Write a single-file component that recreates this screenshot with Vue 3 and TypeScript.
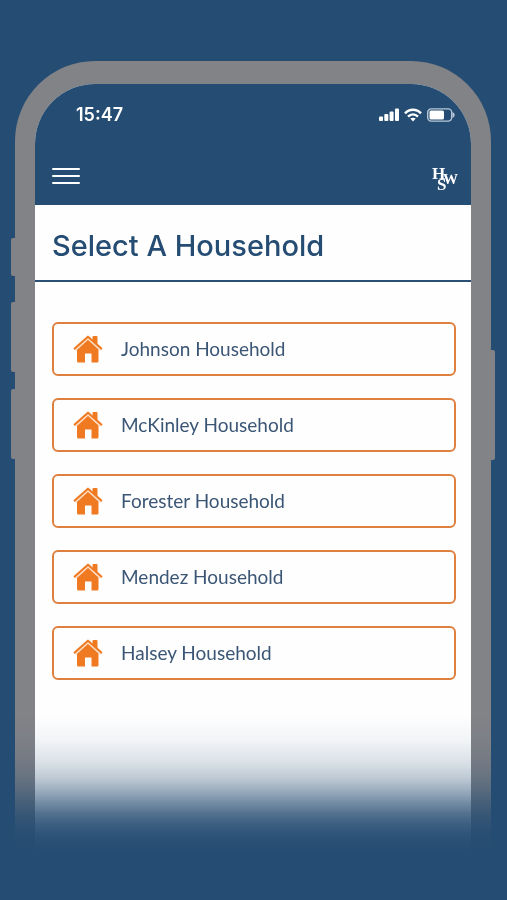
<script setup lang="ts">
interface Household {
  id: number
  name: string
}

const households: Household[] = [
  { id: 1, name: 'Johnson' },
  { id: 2, name: 'McKinley' },
  { id: 3, name: 'Forester' },
  { id: 4, name: 'Mendez' },
  { id: 5, name: 'Halsey' },
]
</script>

<template>
  <div class="page">
    <div class="stage">
      <div class="phone">
        <span class="key key-mute"></span>
        <span class="key key-up"></span>
        <span class="key key-down"></span>
        <span class="key key-power"></span>

        <div class="screen">
          <header class="top">
            <div class="status">
              <time class="clock">15:47</time>
              <div class="signals">
                <svg width="20" height="14" viewBox="0 0 20 14" fill="#fff" aria-hidden="true">
                  <rect x="0" y="8.500" width="4" height="4.500" rx="1" />
                  <rect x="5.300" y="6" width="4" height="7" rx="1" />
                  <rect x="10.600" y="3.500" width="4" height="9.500" rx="1" />
                  <rect x="16" y="0.500" width="4" height="12.500" rx="1" />
                </svg>
                <svg width="18" height="14" viewBox="0 0 18 14" aria-hidden="true">
                  <g fill="none" stroke="#fff" stroke-width="2.400">
                    <path d="M1 5.400C5.500 0.600 12.500 0.600 17 5.400" />
                    <path d="M4 8.700C7 5.800 11 5.800 14 8.700" />
                  </g>
                  <path d="M6.300 10.600C7.800 9.300 10.200 9.300 11.700 10.600L9 13.400Z" fill="#fff" />
                </svg>
                <svg width="28" height="14" viewBox="0 0 28 14" aria-hidden="true">
                  <rect x="0.700" y="0.900" width="24" height="12.200" rx="3.500" fill="none" stroke="#b9c8d8" stroke-width="1.400" />
                  <rect x="2.500" y="2.500" width="14.500" height="9" rx="1.500" fill="#fff" />
                  <path d="M25.500 4C28.400 5.500 28.400 8.500 25.500 10Z" fill="#b9c8d8" />
                </svg>
              </div>
            </div>
            <div class="bar">
              <button class="menu" type="button" aria-label="Menu">
                <span></span><span></span><span></span>
              </button>
              <svg class="logo" width="26" height="36" viewBox="0 0 26 36" role="img" aria-label="HSW">
                <text x="0" y="21" font-size="17">H</text>
                <text x="11" y="26" font-size="15">W</text>
                <text x="5" y="32" font-size="17">S</text>
              </svg>
            </div>
          </header>

          <h1 class="title">Select A Household</h1>

          <ul class="list">
            <li v-for="household in households" :key="household.id">
              <button class="card" type="button">
                <svg width="30" height="30" viewBox="0 0 30 30" aria-hidden="true">
                  <path d="M4 15L15 5L25.500 15V27Q25.500 28.500 24 28.500H18.500V19.500H12V28.500H5.500Q4 28.500 4 27Z" fill="#f07a22" />
                  <path d="M2 16.200L15 4.500L28 16.200" fill="none" stroke="#fde3cd" stroke-width="2.200" />
                  <path d="M19.500 3Q19.500 2 20.500 2H23.500Q24.500 2 24.500 3V11L19.500 6.500Z" fill="#f07a22" />
                  <path d="M1.700 14.500L15 2.700L28.300 14.500" fill="none" stroke="#f07a22" stroke-width="2.200" stroke-linecap="round" stroke-linejoin="round" />
                </svg>
                <span>{{ household.name }} Household</span>
              </button>
            </li>
          </ul>
        </div>
      </div>
    </div>
  </div>
</template>

<style>
body {
  margin: 0;
  background: #254c72;
}
</style>

<style scoped>
.page {
  background: #254c72;
}

/* The device dissolves into the backdrop toward the bottom edge. */
.stage {
  display: flex;
  box-sizing: border-box;
  min-height: 100vh;
  padding: 61px 16px 0 15px;
  mask-image: linear-gradient(
    to top,
    transparent 48px,
    rgb(0 0 0 / 4%) 64px,
    rgb(0 0 0 / 11%) 76px,
    rgb(0 0 0 / 22%) 87px,
    rgb(0 0 0 / 39%) 99px,
    rgb(0 0 0 / 57%) 111px,
    rgb(0 0 0 / 71%) 122px,
    rgb(0 0 0 / 83%) 137px,
    rgb(0 0 0 / 94%) 158px,
    #000 184px
  );
}

.phone {
  position: relative;
  display: flex;
  flex: 1;
  box-sizing: border-box;
  padding: 23px 20px 0;
  border-radius: 80px 80px 0 0;
  background: #828387;
}

.key {
  position: absolute;
  left: -4px;
  width: 4px;
  height: 70px;
  border-radius: 2px 0 0 2px;
  background: #828387;
}

.key-mute {
  top: 177px;
  height: 38px;
}

.key-up {
  top: 241px;
}

.key-down {
  top: 328px;
}

.key-power {
  top: 289px;
  right: -4px;
  left: auto;
  height: 110px;
  border-radius: 0 2px 2px 0;
}

.screen {
  flex: 1;
  overflow: hidden;
  border-radius: 60px 60px 0 0;
  background: #fefefe;
}

.top {
  background: #254c72;
  color: #fff;
}

.status {
  display: flex;
  align-items: center;
  justify-content: space-between;
  height: 62px;
  padding: 0 16px 0 41px;
}

.clock {
  font: 600 18px/24px Inter, sans-serif;
}

.signals {
  display: flex;
  align-items: center;
  gap: 5px;
}

.bar {
  display: flex;
  align-items: center;
  justify-content: space-between;
  height: 59px;
  padding: 0 13px 0 17px;
}

.menu {
  display: flex;
  flex-direction: column;
  gap: 5px;
  width: 28px;
  padding: 0;
  border: 0;
  background: none;
}

.menu span {
  height: 2px;
  border-radius: 1px;
  background: #fff;
}

.logo {
  fill: #fff;
  font-family: "Liberation Serif", serif;
  font-weight: 700;
}

.title {
  margin: 0;
  padding: 23px 17px 16px;
  border-bottom: 2px solid #2c5075;
  color: #254c72;
  font: 500 29px/36px Inter, sans-serif;
}

.list {
  display: grid;
  gap: 22px;
  margin: 0;
  padding: 40px 15px 40px 17px;
  list-style: none;
}

.card {
  display: flex;
  align-items: center;
  gap: 18px;
  box-sizing: border-box;
  width: 100%;
  height: 54px;
  padding: 0 19px;
  border: 2px solid #de8140;
  border-radius: 6px;
  background: #fefefe;
  color: #3b5675;
  font: 400 19px/24px Lato, sans-serif;
}
</style>
